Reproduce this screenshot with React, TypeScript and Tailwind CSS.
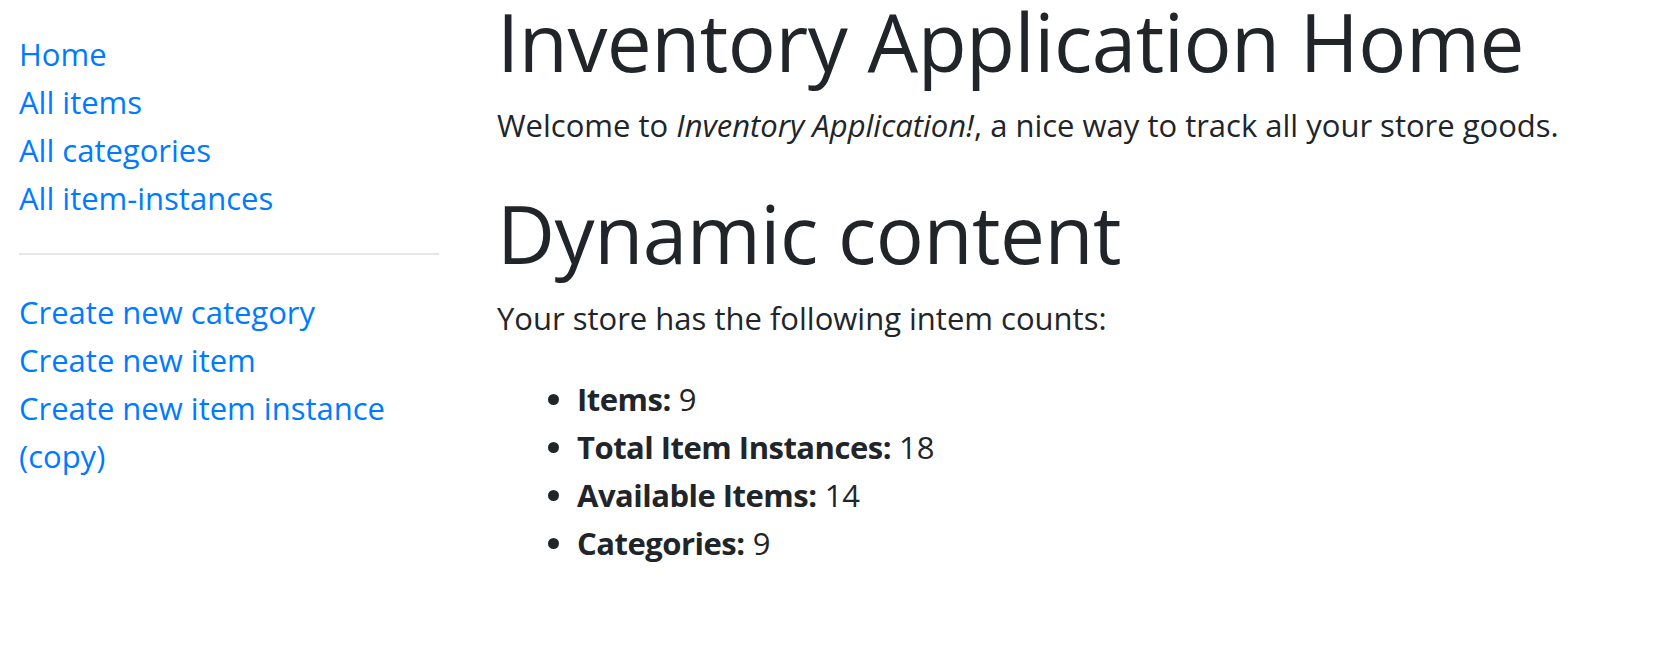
const navTop = ['Home', 'All items', 'All categories', 'All item-instances'];
const navCreate = ['Create new category', 'Create new item', 'Create new item instance (copy)'];

const counts = [
    { label: 'Items:', value: 9 },
    { label: 'Total Item Instances:', value: 18 },
    { label: 'Available Items:', value: 14 },
    { label: 'Categories:', value: 9 },
];

export default function App() {
    return (
        <div className="flex min-h-[648px] bg-white text-[#212529] font-['Open_Sans',sans-serif] text-[31px] leading-[48px]">
            <nav className="w-[478px] shrink-0 pl-[19px] pr-[39px] pt-[30px]">
                <ul className="flex flex-col">
                    {navTop.map(label => (
                        <li key={label}>
                            <a href="#" className="text-[#007bff] hover:underline">{label}</a>
                        </li>
                    ))}
                </ul>
                <hr className="mt-[31px] mb-[33px] border-t-2 border-[#e6e6e6]" />
                <ul className="flex flex-col">
                    {navCreate.map(label => (
                        <li key={label}>
                            <a href="#" className="text-[#007bff] hover:underline">{label}</a>
                        </li>
                    ))}
                </ul>
            </nav>

            <main className="flex-1 pl-[19px] pr-4">
                <h1 className="mt-[1px] text-[80px] leading-[80px] font-medium tracking-[-0.5px]">
                    Inventory Application Home
                </h1>
                <p className="mt-[20px]">
                    Welcome to <em>Inventory Application!</em>, a nice way to track all your store goods.
                </p>

                <h1 className="mt-[44px] text-[80px] leading-[80px] font-medium tracking-[-0.5px]">Dynamic content</h1>
                <p className="mt-[21px]">Your store has the following intem counts:</p>

                <ul className="mt-[33px] list-disc pl-[80px]">
                    {counts.map(c => (
                        <li key={c.label}>
                            <strong className="font-bold tracking-[-0.5px]">{c.label}</strong> {c.value}
                        </li>
                    ))}
                </ul>
            </main>
        </div>
    );
}
